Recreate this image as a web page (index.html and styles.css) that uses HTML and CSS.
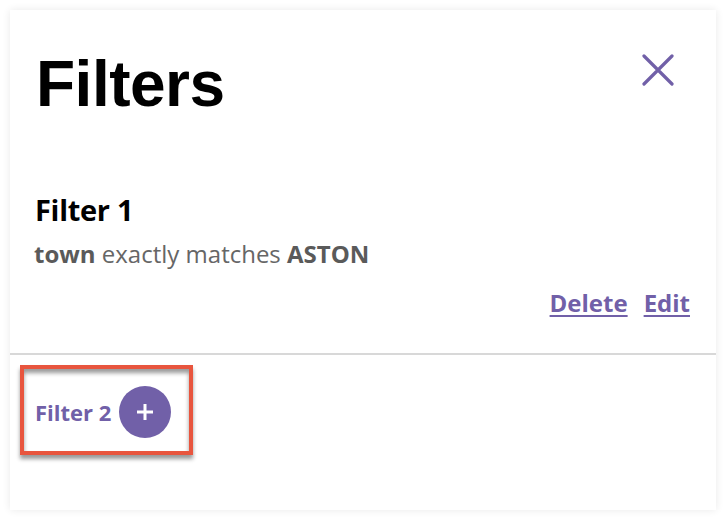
FILE: index.html
```html
<!DOCTYPE html>
<html lang="en">
<head>
<meta charset="UTF-8">
<meta name="viewport" content="width=device-width, initial-scale=1.0">
<title>Filters</title>
<link rel="stylesheet" href="styles.css">
</head>
<body>
  <div class="panel">
    <div class="panel-header">
      <h1>Filters</h1>
      <button class="close-btn" aria-label="Close">
        <svg width="32" height="32" viewBox="0 0 32 32">
          <path d="M2 2 L30 30 M30 2 L2 30" stroke="#7160a8" stroke-width="3.2" stroke-linecap="round" fill="none"/>
        </svg>
      </button>
    </div>

    <div class="filter-item">
      <h2>Filter 1</h2>
      <p class="filter-desc"><b>town</b> exactly matches <b>ASTON</b></p>
      <div class="filter-actions">
        <a href="#">Delete</a>
        <a href="#">Edit</a>
      </div>
    </div>

    <div class="add-area">
      <div class="add-filter">
        <span>Filter 2</span>
        <button class="add-btn" aria-label="Add filter">
          <svg width="20" height="20" viewBox="0 0 20 20">
            <path d="M10 2 V18 M2 10 H18" stroke="#fff" stroke-width="3" fill="none"/>
          </svg>
        </button>
      </div>
    </div>
  </div>
</body>
</html>
```

FILE: styles.css
```css
body {
  margin: 0;
  padding: 10px;
  background: #fff;
  font-family: "Open Sans", "Lato", sans-serif;
}

.panel {
  height: 500px;
  background: #fff;
  box-shadow: 0 0 8px rgba(0, 0, 0, 0.09);
  display: flex;
  flex-direction: column;
}

.panel-header {
  display: flex;
  justify-content: space-between;
  align-items: flex-start;
  padding: 42px 42px 0 26px;
}

.panel-header h1 {
  margin: 0;
  font-family: "Liberation Sans", Arial, sans-serif;
  font-size: 64px;
  line-height: 1;
  letter-spacing: -0.5px;
  color: #000;
}

.close-btn {
  background: none;
  border: none;
  padding: 0;
  margin-top: 2px;
  cursor: pointer;
  display: flex;
}

.filter-item {
  padding: 76px 26px 0 24px;
  border-bottom: 2px solid #d8d8d8;
  box-sizing: border-box;
  height: 239px;
}

.filter-item h2 {
  margin: 0 0 0 1px;
  font-size: 29px;
  line-height: 36px;
  font-weight: 700;
  letter-spacing: -0.3px;
  color: #000;
}

.filter-desc {
  margin: 12px 0 0;
  font-size: 24px;
  line-height: 28px;
  color: #666;
}

.filter-desc b {
  color: #5a5a5a;
}

.filter-actions {
  display: flex;
  justify-content: flex-end;
  gap: 16px;
  margin-top: 18px;
}

.filter-actions a {
  color: #7160a8;
  font-size: 24px;
  font-weight: 700;
  text-decoration: underline;
  text-decoration-thickness: 2px;
  text-underline-offset: 3px;
}

.add-area {
  padding: 10px 0 0 10px;
}

.add-filter {
  display: inline-flex;
  align-items: center;
  gap: 8px;
  padding: 17px 18px 13px 11px;
  border: 4px solid #e8553e;
  box-shadow: 0 4px 4px rgba(0, 0, 0, 0.4), inset 0 4px 4px rgba(0, 0, 0, 0.4);
}

.add-filter span {
  color: #7160a8;
  font-size: 22px;
  font-weight: 700;
}

.add-btn {
  width: 52px;
  height: 52px;
  border-radius: 50%;
  border: none;
  background: #7160a8;
  display: flex;
  align-items: center;
  justify-content: center;
  padding: 0;
  cursor: pointer;
}
```
